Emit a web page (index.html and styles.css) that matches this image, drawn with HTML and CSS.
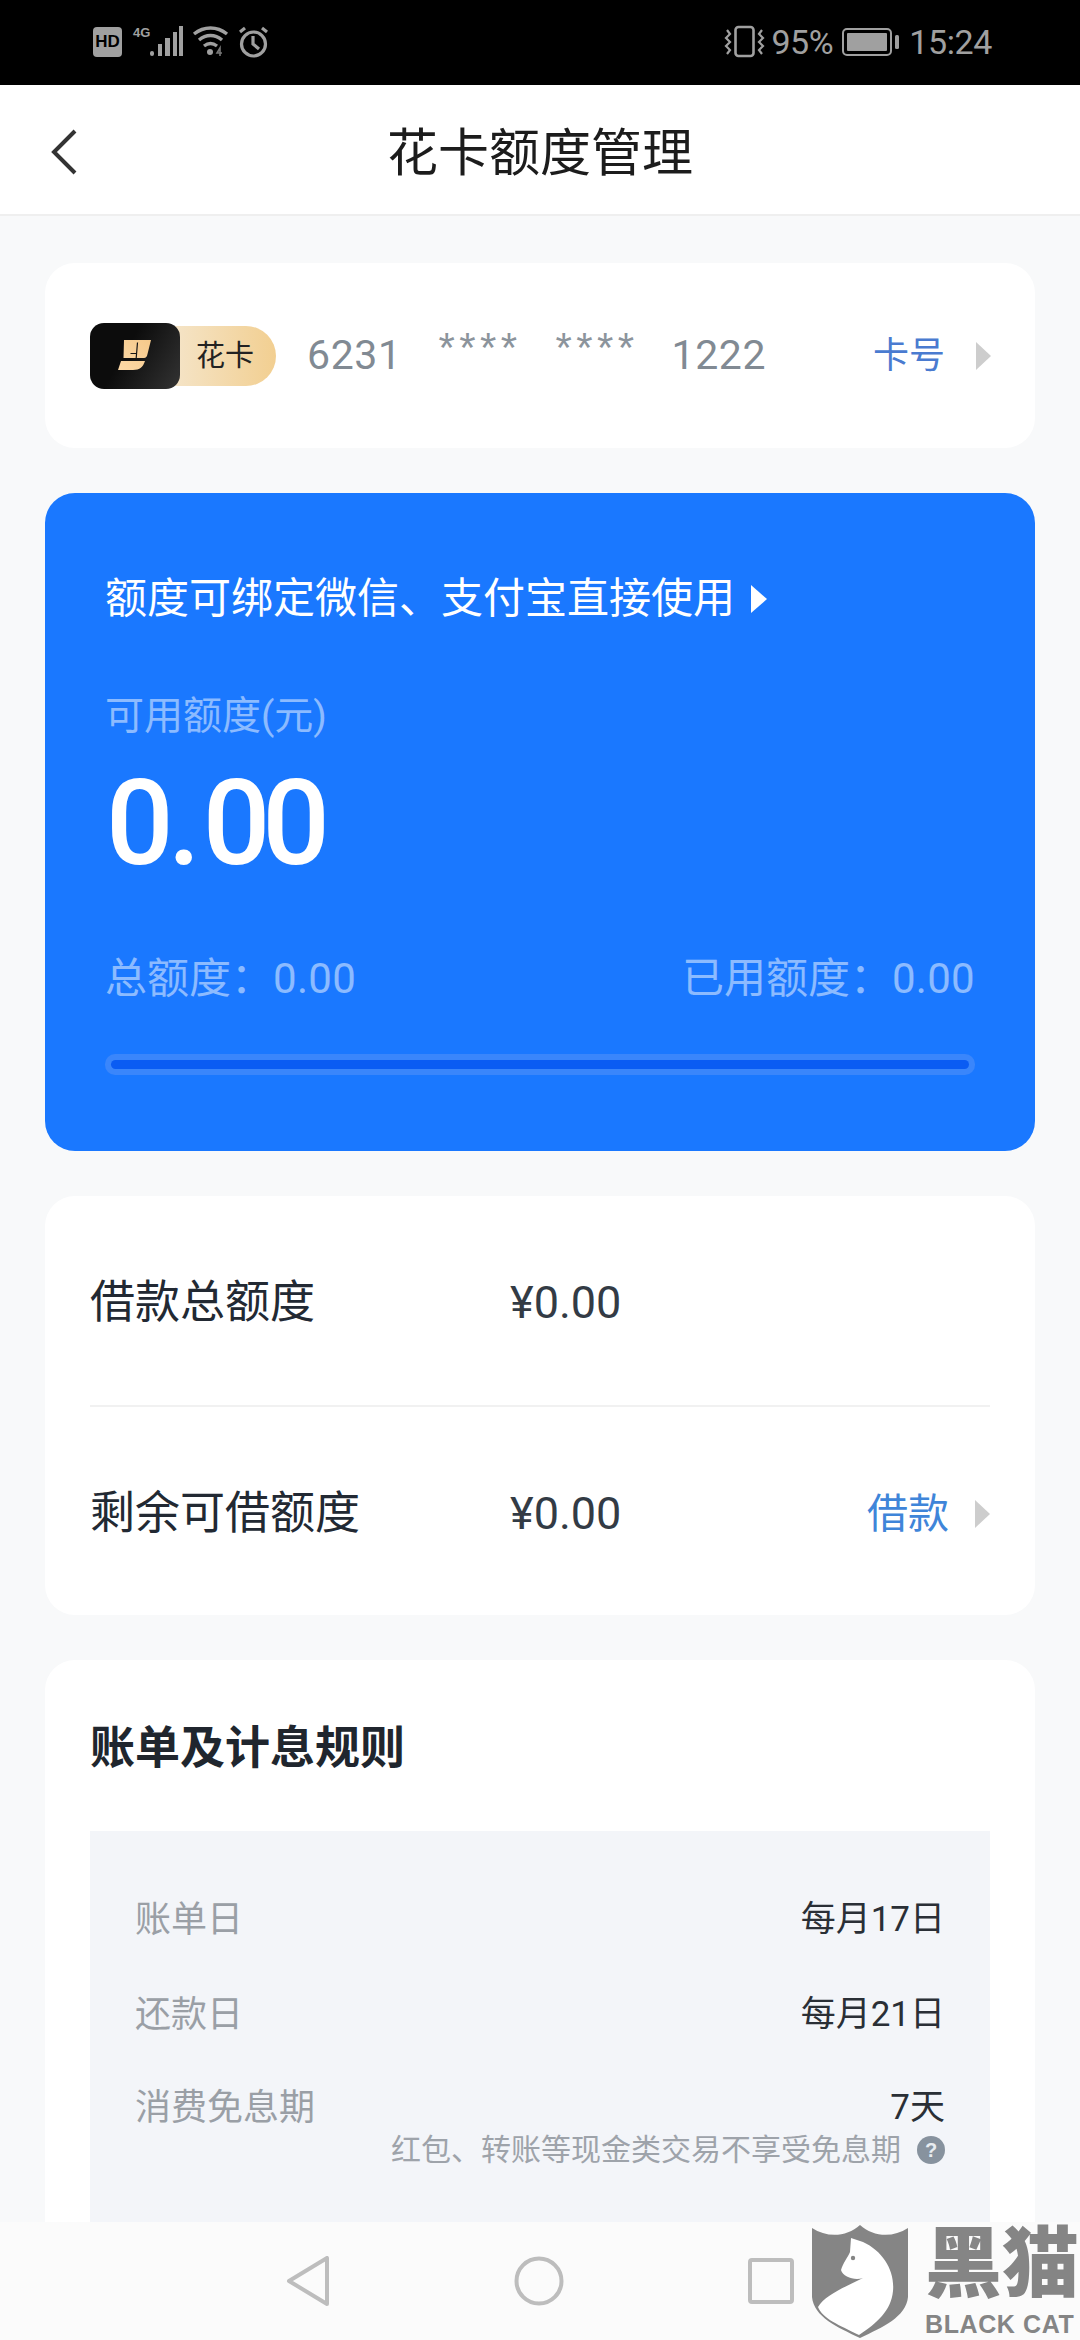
FILE: index.html
```html
<!DOCTYPE html>
<html lang="zh">
<head>
<meta charset="utf-8">
<title>花卡额度管理</title>
<link rel="stylesheet" href="styles.css">
</head>
<body>
<div class="app">
  <div class="status">
    <div class="status-left">
      <span class="hd">HD</span>
      <span class="net"><span class="g4">4G</span>
        <svg class="ic-signal" width="33" height="31" viewBox="0 0 33 31"><g fill="#a0a0a0"><rect x="0" y="25" width="4" height="5" rx="2"/><rect x="8" y="18" width="4" height="12"/><rect x="15" y="12" width="5" height="18"/><rect x="23" y="6" width="4" height="24"/><rect x="29" y="0" width="4" height="30"/></g></svg>
      </span>
      <svg class="ic-wifi" width="37" height="32" viewBox="0 0 37 32" fill="none" stroke="#a0a0a0" stroke-width="3.4"><path d="M2 8C12 0 25 0 35 8"/><path d="M7 14C14 8 23 8 30 14"/><path d="M12 20C16 17 21 17 25 20"/><circle cx="18" cy="26" r="3" fill="#a0a0a0" stroke="none"/><path d="M28 30V22L25 27H30" stroke-width="1.6" stroke="#777"/></svg>
      <svg class="ic-alarm" width="31" height="32" viewBox="0 0 31 32" fill="none" stroke="#a0a0a0" stroke-width="3.2"><circle cx="15.500" cy="18" r="12"/><path d="M15 10V18L21 23"/><path d="M2 6L7 2M29 6L24 2"/></svg>
    </div>
    <div class="status-right">
      <svg class="ic-vib" width="41" height="33" viewBox="0 0 41 33" fill="none" stroke="#a0a0a0"><rect x="11.500" y="2" width="18" height="29" rx="3" stroke-width="2.600"/><path d="M3 5L6 9L2 13L6 17L2 21L6 25L3 29M38 5L35 9L39 13L35 17L39 21L35 25L38 29" stroke-width="2.200"/></svg>
      <span class="st-text">95%</span>
      <svg class="ic-batt" width="58" height="28" viewBox="0 0 58 28"><rect x="1" y="1" width="48" height="26" rx="4" fill="none" stroke="#a0a0a0" stroke-width="2"/><rect x="5" y="5" width="40" height="18" rx="1" fill="#a0a0a0"/><rect x="53" y="7" width="4" height="14" rx="1.500" fill="#a0a0a0"/></svg>
      <span class="st-text">15:24</span>
    </div>
  </div>

  <header class="nav">
    <svg class="back" width="28" height="46" viewBox="0 0 28 46" fill="none" stroke="#333" stroke-width="4"><path d="M25 2L4 23L25 44"/></svg>
    <h1 class="title">花卡额度管理</h1>
  </header>

  <main class="content">
    <section class="card card-no">
      <div class="badge">
        <span class="badge-logo">
          <svg width="34" height="31" viewBox="0 0 34 31"><defs><linearGradient id="gold" x1="0" y1="1" x2="1" y2="0"><stop offset="0" stop-color="#fcd9a8"/><stop offset="1" stop-color="#f5c98a"/></linearGradient></defs><path fill="url(#gold)" d="M6 0H33L29.500 14C29 16.500 28 18 26 18H5.500ZM3 21H27C25 27 22 30 15 30H0Z"/><path d="M19.500 2.500L18.200 18M12.500 13.500H18" fill="none" stroke="#151515" stroke-width="1.200"/></svg>
        </span>
        <span class="badge-text">花卡</span>
      </div>
      <span class="num">6231</span>
      <span class="stars">****</span>
      <span class="stars">****</span>
      <span class="num">1222</span>
      <span class="link link-card">卡号</span>
      <span class="tri"></span>
    </section>

    <section class="quota">
      <div class="promo"><span>额度可绑定微信、支付宝直接使用</span><span class="tri-w"></span></div>
      <div class="q-label">可用额度(元)</div>
      <div class="q-amount">0<span class="q-dot">.</span>00</div>
      <div class="q-row"><span>总额度：<span class="dig">0.00</span></span><span>已用额度：<span class="dig">0.00</span></span></div>
      <div class="bar"><div class="bar-in"></div></div>
    </section>

    <section class="card card-loan">
      <div class="loan-row">
        <span class="loan-k">借款总额度</span><span class="loan-v">¥0.00</span>
      </div>
      <div class="loan-row loan-second">
        <span class="loan-k">剩余可借额度</span><span class="loan-v">¥0.00</span>
        <span class="link link-loan">借款</span><span class="tri"></span>
      </div>
    </section>

    <section class="card card-rules">
      <h2 class="rules-title">账单及计息规则</h2>
      <div class="rules-box">
        <div class="rule"><span class="rule-k">账单日</span><span class="rule-v">每月17日</span></div>
        <div class="rule rule-mid"><span class="rule-k">还款日</span><span class="rule-v">每月21日</span></div>
        <div class="rule rule-last"><span class="rule-k">消费免息期</span><span class="rule-v">7天</span></div>
        <div class="note"><span>红包、转账等现金类交易不享受免息期</span><span class="help">?</span></div>
      </div>
    </section>
  </main>

  <footer class="softkeys">
    <svg width="44" height="50" viewBox="0 0 44 50" fill="none" stroke="#bdbdbd" stroke-width="4" stroke-linejoin="round"><path d="M41 2V48L3 25Z"/></svg>
    <svg width="50" height="50" viewBox="0 0 50 50" fill="none" stroke="#bdbdbd" stroke-width="4"><circle cx="25" cy="25" r="22.500"/></svg>
    <svg width="46" height="46" viewBox="0 0 46 46" fill="none" stroke="#bdbdbd" stroke-width="4"><rect x="2" y="2" width="42" height="42" rx="2"/></svg>
  </footer>

  <div class="wm">
    <svg class="wm-shield" width="98" height="114" viewBox="0 0 98 114"><path fill="#858585" d="M1 3C16 13 36 12 49 0C62 12 82 13 97 3V72C95 92 72 102 49 113C26 102 3 92 1 72Z"/><path fill="#fff" d="M40 13L52 17C72 26 84 46 82 66C80 86 66 98 48 110C28 100 12 94 7 82C14 70 34 62 52 53C44 56 32 52 30 45C32 38 37 32 39 27Z"/><circle cx="42" cy="33" r="2.200" fill="#858585"/></svg>
    <div class="wm-text">
      <span class="wm-cn">黑猫</span>
      <span class="wm-en">BLACK CAT</span>
    </div>
  </div>
</div>
</body>
</html>
```
FILE: styles.css
```css
* { box-sizing: border-box; }
html, body { margin: 0; padding: 0; }
body { font-family: Roboto, "Noto Sans CJK SC", sans-serif; background: #f8f8f8; }
.app { position: relative; width: 1080px; height: 2340px; display: flex; flex-direction: column; overflow: hidden; background: #f8f9fa; }

.status { height: 85px; flex: none; background: #000; display: flex; justify-content: space-between; align-items: center; padding: 0 88px 2px 93px; color: #a0a0a0; }
.status-left, .status-right { display: flex; align-items: center; }
.hd { width: 29px; height: 30px; border-radius: 4px; background: #a0a0a0; color: #000; font: 700 17px/30px "Liberation Sans", sans-serif; text-align: center; margin-right: 11px; }
.net { position: relative; display: flex; align-items: flex-end; width: 50px; height: 30px; margin-right: 9px; }
.g4 { position: absolute; left: 0; top: -2px; font: 700 13px/16px "Liberation Sans", sans-serif; color: #a0a0a0; }
.ic-signal { position: absolute; right: 0; bottom: 0; }
.ic-wifi { margin-right: 9px; }
.st-text { font-size: 34px; line-height: 40px; letter-spacing: -.4px; }
.ic-vib { margin-right: 6px; }
.ic-batt { margin: 0 9px 0 9px; }

.nav { position: relative; height: 131px; flex: none; background: #fff; border-bottom: 2px solid #efefef; display: flex; align-items: center; justify-content: center; }
.back { position: absolute; left: 50px; top: 44px; }
.title { margin: 0; font-size: 51px; line-height: 70px; font-weight: 400; color: #1c1c1c; position: relative; top: 4px; }

.content { flex: 1; min-height: 0; overflow: hidden; padding: 47px 45px 0; display: flex; flex-direction: column; gap: 45px; }
.card { background: #fff; border-radius: 30px; flex: none; }

.card-no { height: 185px; padding: 0 44px 0 45px; display: flex; align-items: center; }
.badge { display: flex; align-items: center; width: 186px; height: 66px; margin-right: 31px; position: relative; }
.badge-logo { position: relative; z-index: 1; width: 90px; height: 66px; border-radius: 14px; background: linear-gradient(120deg, #0c0c0c 40%, #333 100%); display: flex; align-items: center; justify-content: center; flex: none; }
.badge-text { margin-left: -16px; padding-left: 32px; width: 112px; height: 60px; border-radius: 0 30px 30px 0; background: linear-gradient(90deg, #f5e6cc, #f2cf91); font-size: 29px; line-height: 60px; color: #222; flex: none; }
.num { font-size: 41px; line-height: 50px; color: #818a93; letter-spacing: .6px; position: relative; top: -1px; }
.stars { font-family: "Liberation Sans", sans-serif; font-size: 42px; line-height: 50px; color: #8c949c; letter-spacing: 4.400px; margin-left: 37px; position: relative; top: -8px; }
.stars + .stars { margin-left: 34px; }
.stars + .num { margin-left: 33px; }
.link { color: #4a7bd0; }
.link-card { font-size: 36px; line-height: 50px; margin-left: auto; margin-right: 31px; }
.tri { width: 0; height: 0; border-left: 15px solid #cdcdcd; border-top: 14px solid transparent; border-bottom: 14px solid transparent; flex: none; }

.quota { height: 658px; flex: none; background: #1a78ff; border-radius: 30px; padding: 76px 60px 0; color: #fff; }
.promo { display: flex; align-items: center; font-size: 42px; line-height: 60px; }
.tri-w { width: 0; height: 0; margin-left: 16px; border-left: 16px solid #fff; border-top: 14px solid transparent; border-bottom: 14px solid transparent; }
.q-label { margin-top: 62px; font-size: 39px; line-height: 50px; color: rgba(255,255,255,.5); }
.q-amount { margin-top: 17px; font-size: 119px; line-height: 132px; font-weight: 500; letter-spacing: -8px; padding-left: 1px; }
.q-dot { letter-spacing: 2px; margin-left: 2px; }
.q-row { margin-top: 61px; display: flex; justify-content: space-between; font-size: 42px; line-height: 56px; color: rgba(255,255,255,.5); }
.dig { letter-spacing: .3px; }
.bar { margin-top: 47px; height: 21px; border-radius: 10px; background: #3a86fb; padding: 6px; }
.bar-in { height: 9px; border-radius: 5px; background: #0a5cf3; }

.card-loan { height: 419px; padding: 0 45px; display: flex; flex-direction: column; }
.loan-row { flex: 1; display: flex; align-items: center; padding-top: 6px; }
.loan-second { border-top: 2px solid #f1f1f1; }
.loan-k { width: 420px; font-size: 45px; line-height: 60px; color: #222933; }
.loan-v { font-size: 45px; line-height: 60px; color: #333b45; }
.link-loan { font-size: 41px; line-height: 60px; margin-left: auto; margin-right: 26px; color: #3f85d9; }

.card-rules { flex: 1; min-height: 0; padding: 0 45px; border-radius: 30px 30px 0 0; }
.rules-title { margin: 0; padding-top: 58px; font-size: 45px; line-height: 62px; font-weight: 700; color: #20262e; }
.rules-box { margin-top: 51px; height: 500px; background: #f3f5f9; padding: 65px 45px 0 45px; }
.rule { display: flex; justify-content: space-between; height: 95px; font-size: 36px; line-height: 48px; }
.rule-mid { height: 93px; }
.rule-last { height: 44px; }
.rule-k { color: #9a9fa6; }
.rule-v { color: #2a2f36; font-size: 35px; }
.note { display: flex; justify-content: flex-end; align-items: center; font-size: 30px; line-height: 44px; color: #9ea3aa; }
.help { width: 28px; height: 28px; margin-left: 16px; border-radius: 50%; background: #87929e; color: #e8ecf0; font: 700 20px/28px "Liberation Sans", sans-serif; text-align: center; }

.softkeys { height: 118px; flex: none; background: #fbfbfb; display: flex; align-items: center; padding: 0 0 0 286px; gap: 184px; }

.wm { position: absolute; left: 811px; top: 2225px; width: 269px; display: flex; }
.wm-shield { flex: none; }
.wm-text { margin-left: 16px; display: flex; flex-direction: column; }
.wm-cn { font-size: 77px; line-height: 80px; font-weight: 900; color: #858585; white-space: nowrap; }
.wm-en { margin-top: 9px; font: 700 25px/20px "Liberation Sans", sans-serif; color: #858585; letter-spacing: .6px; white-space: nowrap; }
```
